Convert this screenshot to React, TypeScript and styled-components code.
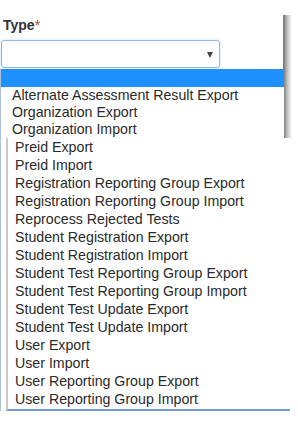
import React from 'react'
import styled, { createGlobalStyle } from 'styled-components'

const GlobalStyle = createGlobalStyle`
  html, body {
    margin: 0;
    padding: 0;
    background: #fff;
    font-family: "Liberation Sans", Arial, sans-serif;
  }
`

const Page = styled.div`
  position: relative;
  width: 298px;
  height: 422px;
  overflow: hidden;
  padding: 17px 0 0 1px;
  box-sizing: border-box;
`

const Label = styled.label`
  display: block;
  margin-left: 2px;
  font-size: 14px;
  font-weight: bold;
  color: #333;
  line-height: 17px;
  > span {
    color: #c0392b;
    font-weight: normal;
  }
`

const SelectBox = styled.div`
  margin-top: 6px;
  width: 219px;
  height: 28px;
  box-sizing: border-box;
  border: 1px solid #8fb6ea;
  border-radius: 3px;
  box-shadow: 0 0 2px rgba(102, 175, 233, 0.5);
  display: flex;
  align-items: center;
  justify-content: flex-end;
  padding-right: 6px;
`

const Arrow = styled.span`
  width: 0;
  height: 0;
  border-left: 3.5px solid transparent;
  border-right: 3.5px solid transparent;
  border-top: 6px solid #444;
  margin-top: 2px;
`

const Popup = styled.div`
  position: absolute;
  left: 0;
  top: 69px;
  width: 283px;
  border-left: 1px solid #a9bfdc;
  background: #fff;
`

const Option = styled.div<{ $selected?: boolean; $tall?: boolean }>`
  height: ${p => (p.$selected || p.$tall ? 18 : 17)}px;
  line-height: ${p => (p.$selected || p.$tall ? 18 : 17)}px;
  padding-left: 11px;
  font-size: 14.2px;
  color: #2a2a2a;
  white-space: nowrap;
  background: ${p => (p.$selected ? '#1e90ff' : 'transparent')};
`

const Shadow = styled.div`
  position: absolute;
  left: 283px;
  top: 15px;
  width: 8px;
  height: 125px;
  background: linear-gradient(to right, #6f6f6f, #c9c9c9 60%, #f2f2f2);
`

const LowerPanel = styled.div`
  margin-left: 5px;
  width: 284px;
  box-sizing: border-box;
  border-left: 2px solid #c8c8c8;
  border-bottom: 2px solid #6f98d6;
  background: #fff;
  padding-bottom: 1px;
  > div {
    padding-left: 7px;
  }
`

const upper = ['Alternate Assessment Result Export', 'Organization Export', 'Organization Import']

const lower = [
  'Preid Export',
  'Preid Import',
  'Registration Reporting Group Export',
  'Registration Reporting Group Import',
  'Reprocess Rejected Tests',
  'Student Registration Export',
  'Student Registration Import',
  'Student Test Reporting Group Export',
  'Student Test Reporting Group Import',
  'Student Test Update Export',
  'Student Test Update Import',
  'User Export',
  'User Import',
  'User Reporting Group Export',
  'User Reporting Group Import',
]

export default function App() {
  return (
    <>
      <GlobalStyle />
      <Page>
        <Label>
          Type<span>*</span>
        </Label>
        <SelectBox>
          <Arrow />
        </SelectBox>
        <Shadow />
        <Popup>
          <Option $selected />
          {upper.map(t => (
            <Option key={t}>{t}</Option>
          ))}
          <LowerPanel>
            {lower.map(t => (
              <Option key={t} $tall>
                {t}
              </Option>
            ))}
          </LowerPanel>
        </Popup>
      </Page>
    </>
  )
}
